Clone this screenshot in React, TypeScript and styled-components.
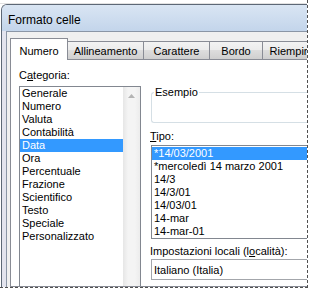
import React from "react";
import styled, { createGlobalStyle } from "styled-components";

const GlobalStyle = createGlobalStyle`
  html, body {
    margin: 0;
    padding: 0;
    background: #fff;
  }
  body {
    font-family: "Liberation Sans", Arial, sans-serif;
    font-size: 11px;
    color: #000;
  }
`;

// the screenshot is a crop: dashed frame on right and bottom
const Canvas = styled.div`
  width: 307px;
  height: 287px;
  border-right: 1px dashed #505050;
  border-bottom: 1px dashed #505050;
  overflow: hidden;
  display: flex;
  flex-direction: column;
  background: #fff;
`;

const Backdrop = styled.div`
  height: 3px;
  flex-shrink: 0;
  border-bottom: 1px solid #e2e2e2;
`;

const Window = styled.div`
  flex: 1;
  min-height: 0;
  margin-left: 1px;
  display: flex;
  flex-direction: column;
  border-left: 1px solid #5d6876;
  border-top: 1px solid #5d6876;
  border-top-left-radius: 6px;
  background: #e3e4ee;
  overflow: hidden;
`;

const TitleBar = styled.div`
  height: 26px;
  flex-shrink: 0;
  box-sizing: border-box;
  padding: 4px 0 0 6px;
  display: flex;
  align-items: center;
  font-size: 12px;
  background: linear-gradient(#d9e5f3, #c3d5eb);
`;

const FrameBody = styled.div`
  flex: 1;
  min-height: 0;
  display: flex;
  padding-left: 4px;
`;

const Client = styled.div`
  flex: 1;
  min-width: 0;
  display: flex;
  flex-direction: column;
  border-left: 1px solid #8b96a6;
  border-top: 1px solid #8b96a6;
  background: #f0f0f0;
  padding: 6px 0 0 3px;
`;

const TabStrip = styled.div`
  height: 21px;
  flex-shrink: 0;
  display: flex;
  align-items: flex-end;
`;

const Tab = styled.div<{ $w: number; $active?: boolean }>`
  width: ${(p) => p.$w}px;
  flex-shrink: 0;
  box-sizing: border-box;
  height: ${(p) => (p.$active ? 22 : 18)}px;
  margin-bottom: ${(p) => (p.$active ? -1 : 0)}px;
  margin-left: -1px;
  &:first-child {
    margin-left: 0;
  }
  position: relative;
  z-index: ${(p) => (p.$active ? 1 : 0)};
  border: 1px solid #898c95;
  border-bottom: none;
  padding-top: ${(p) => (p.$active ? 6 : 3)}px;
  line-height: 13px;
  text-align: center;
  white-space: nowrap;
  overflow: hidden;
  background: ${(p) => (p.$active ? "#fff" : "linear-gradient(#f3f3f3, #ebebeb 50%, #dddddd 50%, #cfcfcf)")};
`;

const TabPage = styled.div`
  flex: 1;
  min-height: 0;
  display: flex;
  border: 1px solid #898c95;
  border-right: none;
  background: #fff;
  padding: 9px 0 0 8px;
  overflow: hidden;
`;

const LeftCol = styled.div`
  width: 122px;
  flex-shrink: 0;
  display: flex;
  flex-direction: column;
`;

const RightCol = styled.div`
  width: 190px;
  flex-shrink: 0;
  margin-left: 9px;
  display: flex;
  flex-direction: column;
`;

const Label = styled.div<{ $top?: number; $bottom?: number }>`
  line-height: 13px;
  height: 13px;
  white-space: nowrap;
  margin-top: ${(p) => p.$top ?? 0}px;
  margin-bottom: ${(p) => p.$bottom ?? 0}px;
`;

const Key = styled.span`
  text-decoration: underline;
  text-underline-offset: 1px;
`;

const ListBox = styled.div`
  flex: 1;
  display: flex;
  border: 1px solid #828790;
  border-bottom: none;
`;

const Items = styled.div`
  flex: 1;
  min-width: 0;
`;

const Item = styled.div<{ $sel?: boolean }>`
  height: 13px;
  line-height: 13px;
  padding-left: 2px;
  white-space: nowrap;
  background: ${(p) => (p.$sel ? "#3399ff" : "transparent")};
  color: ${(p) => (p.$sel ? "#fff" : "#000")};
`;

const ScrollTrack = styled.div`
  width: 17px;
  flex-shrink: 0;
  background: linear-gradient(90deg, #e6e6e6, #f4f4f4 30%, #f4f4f4 70%, #ececec);
`;

const ArrowButton = styled.div`
  height: 17px;
  display: flex;
  align-items: center;
  justify-content: center;
`;

const GroupBox = styled.fieldset`
  margin: 17px 0 0 1px;
  padding: 0;
  height: 37px;
  box-sizing: border-box;
  border: 1px solid #d5dfe5;
  border-radius: 3px;
  border-right: none;
`;

const Legend = styled.legend`
  margin-left: 2px;
  padding: 0 1px;
  line-height: 13px;
`;

const TypeList = styled.div`
  margin-left: 1px;
  height: 94px;
  box-sizing: border-box;
  border: 1px solid #828790;
  border-right: none;
  padding-top: 1px;
`;

const Combo = styled.div`
  margin-left: 1px;
  height: 21px;
  box-sizing: border-box;
  border: 1px solid #a3a6ab;
  border-right: none;
  padding-left: 2px;
  display: flex;
  align-items: center;
  white-space: nowrap;
`;

const categories = [
  "Generale",
  "Numero",
  "Valuta",
  "Contabilità",
  "Data",
  "Ora",
  "Percentuale",
  "Frazione",
  "Scientifico",
  "Testo",
  "Speciale",
  "Personalizzato",
];

const types = ["*14/03/2001", "*mercoledì 14 marzo 2001", "14/3", "14/3/01", "14/03/01", "14-mar", "14-mar-01"];

const tabs = [
  { name: "Numero", w: 58 },
  { name: "Allineamento", w: 77 },
  { name: "Carattere", w: 67 },
  { name: "Bordo", w: 54 },
  { name: "Riempimento", w: 80 },
];

export default function App() {
  return (
    <>
      <GlobalStyle />
      <Canvas>
        <Backdrop />
        <Window>
          <TitleBar>Formato celle</TitleBar>
          <FrameBody>
            <Client>
              <TabStrip>
                {tabs.map((t, i) => (
                  <Tab key={t.name} $w={t.w} $active={i === 0}>
                    {t.name}
                  </Tab>
                ))}
              </TabStrip>
              <TabPage>
                <LeftCol>
                  <Label $bottom={4}>
                    C<Key>a</Key>tegoria:
                  </Label>
                  <ListBox>
                    <Items>
                      {categories.map((c) => (
                        <Item key={c} $sel={c === "Data"}>
                          {c}
                        </Item>
                      ))}
                    </Items>
                    <ScrollTrack>
                      <ArrowButton>
                        <svg width="7" height="4" viewBox="0 0 7 4">
                          <path d="M0 4 L3.5 0 L7 4 Z" fill="#b4b4b4" />
                        </svg>
                      </ArrowButton>
                    </ScrollTrack>
                  </ListBox>
                </LeftCol>
                <RightCol>
                  <GroupBox>
                    <Legend>Esempio</Legend>
                  </GroupBox>
                  <Label $top={7} $bottom={2}>
                    <Key>T</Key>ipo:
                  </Label>
                  <TypeList>
                    {types.map((t, i) => (
                      <Item key={t} $sel={i === 0}>
                        {t}
                      </Item>
                    ))}
                  </TypeList>
                  <Label $top={6} $bottom={1}>
                    Impostazioni locali (l<Key>o</Key>calità):
                  </Label>
                  <Combo>Italiano (Italia)</Combo>
                </RightCol>
              </TabPage>
            </Client>
          </FrameBody>
        </Window>
      </Canvas>
    </>
  );
}
